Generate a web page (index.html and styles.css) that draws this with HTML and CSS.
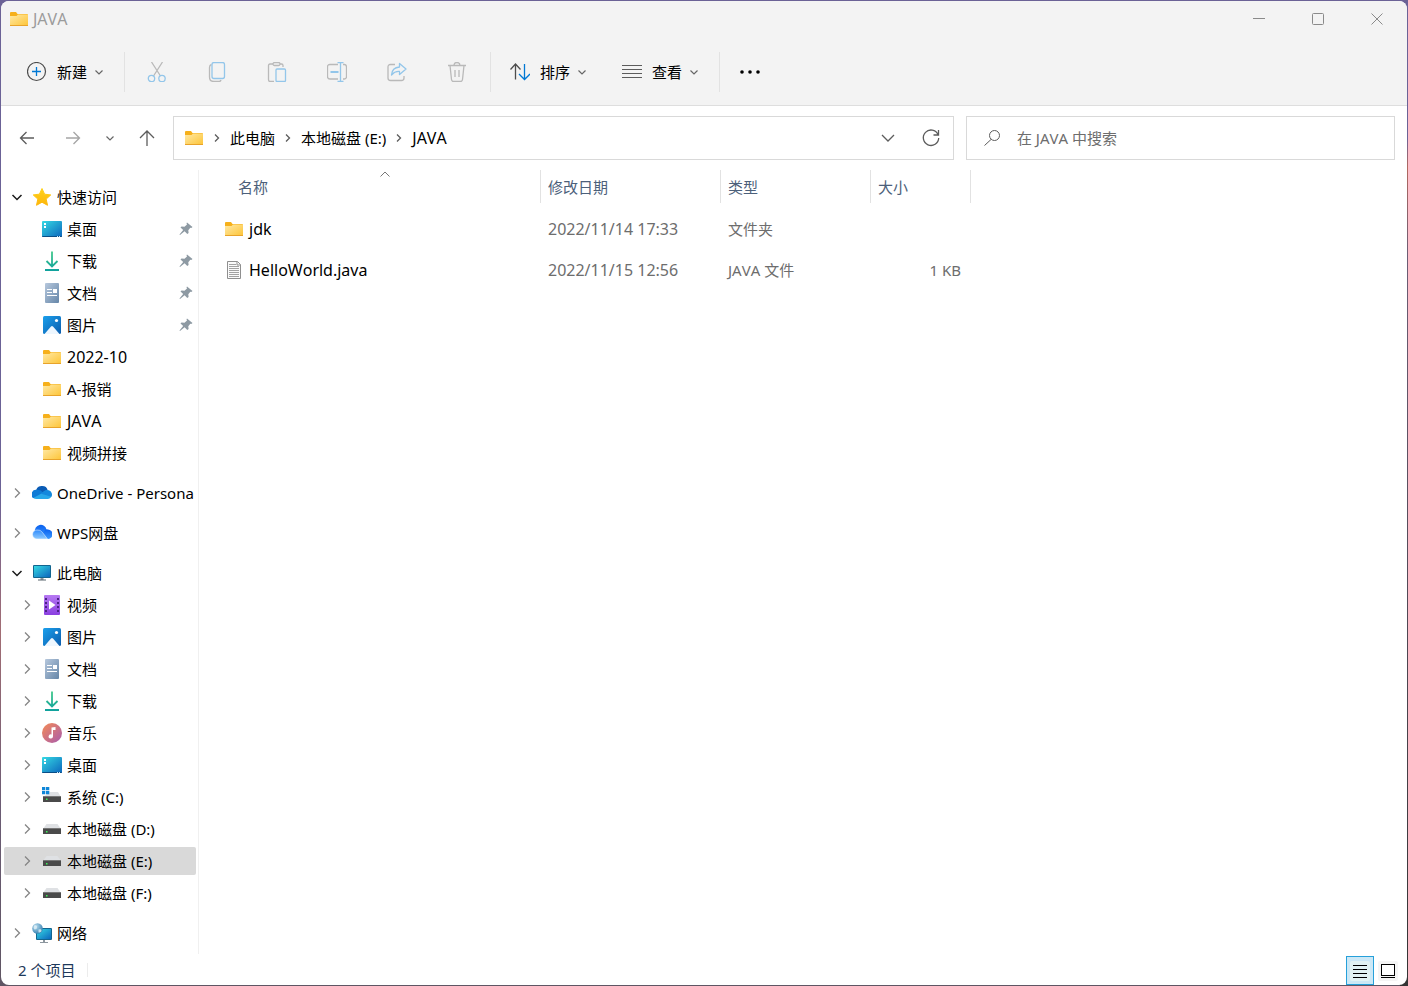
FILE: index.html
```html
<!DOCTYPE html>
<html lang="zh-CN">
<head>
<meta charset="utf-8">
<title>JAVA</title>
<link rel="stylesheet" href="styles.css">
</head>
<body>
<svg class="sprite" aria-hidden="true">
  <defs>
    <linearGradient id="g-folder" x1="0" y1="0" x2="1" y2="1"><stop offset="0" stop-color="#ffe9a6"/><stop offset="1" stop-color="#fdc436"/></linearGradient>
    <linearGradient id="g-screen" x1="0" y1="0" x2="1" y2="1"><stop offset="0" stop-color="#35d9e3"/><stop offset="1" stop-color="#0c66bd"/></linearGradient>
    <linearGradient id="g-down" x1="0" y1="0" x2="0" y2="20" gradientUnits="userSpaceOnUse"><stop offset="0" stop-color="#42c98a"/><stop offset="1" stop-color="#0fa19d"/></linearGradient>
    <linearGradient id="g-doc" x1="0" y1="0" x2="1" y2="1"><stop offset="0" stop-color="#b7c8dd"/><stop offset="1" stop-color="#6586a8"/></linearGradient>
    <linearGradient id="g-pic" x1="0" y1="0" x2="1" y2="1"><stop offset="0" stop-color="#1ba0ec"/><stop offset="1" stop-color="#0b5cad"/></linearGradient>
    <linearGradient id="g-video" x1="0" y1="0" x2="0" y2="1"><stop offset="0" stop-color="#b679f2"/><stop offset="1" stop-color="#8a3fe0"/></linearGradient>
    <linearGradient id="g-music" x1="0" y1="0" x2="1" y2="1"><stop offset="0" stop-color="#f58b55"/><stop offset="1" stop-color="#a85bae"/></linearGradient>
    <linearGradient id="g-star" x1="0" y1="0" x2="0" y2="1"><stop offset="0" stop-color="#ffd21a"/><stop offset="1" stop-color="#fdb60c"/></linearGradient>
    <linearGradient id="g-wps" x1="0" y1="0" x2="0" y2="1"><stop offset="0" stop-color="#0b62f0"/><stop offset="1" stop-color="#3d9bff"/></linearGradient>
    <linearGradient id="g-wps2" x1="0" y1="0" x2="0" y2="1"><stop offset="0" stop-color="#2f8bfb"/><stop offset="1" stop-color="#8fcaff"/></linearGradient>
    <radialGradient id="g-globe" cx="0.35" cy="0.3" r="0.8"><stop offset="0" stop-color="#b8dcee"/><stop offset="1" stop-color="#2a78ab"/></radialGradient>
  </defs>
  <symbol id="i-folder" viewBox="0 0 20 20">
    <path d="M1 4q0-1 1-1h5l1.500 2H18q1 0 1 1v10H1z" fill="#f6b01b"/>
    <path d="M1 7h6.500l1.500-1.500H19V17H1z" fill="url(#g-folder)"/>
    <path d="M1 16h18v.5q0 .5-.5.5h-17q-.5 0-.5-.5z" fill="#e8a32a"/>
  </symbol>
  <symbol id="i-star" viewBox="0 0 20 20"><path d="M10 1.500l2.600 5.700 6.200.7-4.600 4.200 1.300 6.200L10 15.200l-5.500 3.100 1.300-6.200L1.200 7.900l6.200-.7z" fill="url(#g-star)" stroke="url(#g-star)" stroke-linejoin="round"/></symbol>
  <symbol id="i-desktop" viewBox="0 0 20 20">
    <rect y="2" width="20" height="16" rx="1" fill="url(#g-screen)"/><path d="M0 17h20q0 1-1 1H1q-1 0-1-1z" fill="#0a4e86"/>
    <path d="M2 4h2v2H2zM2 7h2v2H2z" fill="#fff"/><path d="M15 17h1v1h-1zM17 17h1v1h-1z" fill="#cfe8f8"/>
  </symbol>
  <symbol id="i-download" viewBox="0 0 20 20"><path d="M10 .5V15M4.500 10l5.500 5.500L15.500 10M3 19h14" fill="none" stroke="url(#g-down)" stroke-width="1.800"/></symbol>
  <symbol id="i-doc" viewBox="0 0 20 20"><rect x="3" width="14" height="20" rx="1" fill="url(#g-doc)"/><path d="M5 6.500h5M5 9.500h5M5 12.500h10" stroke="#fff" fill="none"/><path d="M11 6h4v4h-4z" fill="#fff"/></symbol>
  <symbol id="i-pic" viewBox="0 0 20 20"><rect x="1" y="1" width="18" height="18" rx="1.500" fill="url(#g-pic)"/><path d="M2.500 19L9 11.500q1-1 2 0L17.500 19z" fill="#eef7ff"/><circle cx="14.500" cy="5.500" r="1.600" fill="#fff"/></symbol>
  <symbol id="i-video" viewBox="0 0 20 20"><rect x="2" width="16" height="20" rx="1" fill="url(#g-video)"/><path d="M4 3v15M16 3v15" stroke="#4b2286" stroke-width="2" stroke-dasharray="2 2"/><path d="M7 5.500v9l6.500-4.500z" fill="#fff"/></symbol>
  <symbol id="i-music" viewBox="0 0 20 20"><circle cx="10" cy="10" r="10" fill="url(#g-music)"/><path d="M9.500 4.500l4-.5v3h-2.500v6.500a2.200 2 0 1 1-1.500-2z" fill="#fff"/></symbol>
  <symbol id="i-pc" viewBox="0 0 20 20"><rect x="1" y="2" width="18" height="13" rx="1" fill="#12658f"/><rect x="2" y="3" width="16" height="11" fill="url(#g-screen)"/><path d="M8.500 15h3v2h-3z" fill="#8d979f"/><path d="M6 16.500h8v1H6z" fill="#59646c"/></symbol>
  <symbol id="i-drive" viewBox="0 0 20 20"><path d="M4.500 5h11L19 10H1z" fill="#dfe1e4"/><rect x="1" y="9" width="18" height="6" rx=".5" fill="#4a4a4a"/><path d="M1 9h18v1H1z" fill="#777"/><path d="M4 12h1.500v1.500H4z" fill="#3df25a"/></symbol>
  <symbol id="i-sysdrive" viewBox="0 0 20 20"><path d="M8 5h8l3 5H1z" fill="#dfe1e4"/><rect x="1" y="9" width="18" height="6" rx=".5" fill="#4a4a4a"/><path d="M1 9h18v1H1z" fill="#777"/><path d="M4 11.500h1.500V13H4z" fill="#3df25a"/><path d="M0 0h3.300v3.300H0zM4 0h3.300v3.300H4zM0 4h3.300v3.300H0zM4 4h3.300v3.300H4z" fill="#0f86d8"/></symbol>
  <symbol id="i-network" viewBox="0 0 20 20"><rect x="4" y="5" width="16" height="12" rx="1" fill="#12658f"/><rect x="5" y="6" width="14" height="10" fill="url(#g-screen)"/><path d="M11 17h2v2h3v1H8v-1h3z" fill="#8d979f"/><circle cx="5.500" cy="5.500" r="5.300" fill="url(#g-globe)"/><path d="M2 2.500q3-1 3 1.500t-2.500 2.500Q1 5 2 2.500zM6.500 6.500q3-1 3 1t-3 2z" fill="#e2f1f7" opacity=".8"/></symbol>
  <symbol id="i-onedrive" viewBox="0 0 20 20"><path d="M4 9a6 6 0 0 1 11.800-1.500L11 12z" fill="#0a5bb5"/><path d="M1 15A4.700 4.700 0 0 1 4.700 6.800q3.300-.3 5.800 2.200l4 6z" fill="#0f7bd6"/><path d="M1.200 15l9.300-5q2-3.500 5.300-2.700A4.400 4.400 0 0 1 16 16H4.500q-2 0-3.300-1z" fill="#28a8ea"/><path d="M9 10.800l2-1.700q2-2.400 4.500-1.800 3.500.2 4.400 3.700.2 1.600-.5 2.800z" fill="#1488dd"/></symbol>
  <symbol id="i-wps" viewBox="0 0 20 20"><path d="M3 9a5.800 5.800 0 0 1 11.500-2.500l-2 9H4z" fill="url(#g-wps)"/><path d="M8 15.500L12 8.500q1.500-3 4-2a4.600 4.600 0 0 1-.5 9.500z" fill="url(#g-wps)"/><path d="M5 7q3.500-.5 5.500 2.500L15.500 16H5A4.400 4.400 0 0 1 5 7z" fill="url(#g-wps2)" stroke="#fff" stroke-width=".5"/></symbol>
  <symbol id="i-pin" viewBox="0 0 14 14"><path d="M8 .5L13.500 5l-1.200 1-1-.2-2 2.400.3 2.800L8.300 12 5.600 9.200 1 13l-.5-.5L4.200 8 1.500 5.500l1-1 3 .2L8 2.500 7.500 1.200z" fill="#8e9aa3"/></symbol>
  <symbol id="i-file" viewBox="0 0 20 20"><path d="M3.500 1.500h10l3 3v14h-13z" fill="#fafafa" stroke="#8f8f8f"/><path d="M13 1.500V5h3.500" fill="none" stroke="#8f8f8f"/><path d="M5 4.500h7M5 6.500h10M5 8.500h10M5 10.500h10M5 12.500h10M5 14.500h10M5 16.500h10" stroke="#a2a2a2"/></symbol>
  <symbol id="i-right" viewBox="0 0 10 10"><path d="M3 .5L7.500 5 3 9.500"/></symbol>
  <symbol id="i-crumb" viewBox="0 0 10 10"><path d="M3 1.500L6.500 5 3 8.500"/></symbol>
  <symbol id="i-chev" viewBox="0 0 10 10"><path d="M1.500 3.500L5 7l3.500-3.500"/></symbol>
  <symbol id="i-open" viewBox="0 0 12 12"><path d="M1.500 4L6 8.500 10.500 4"/></symbol>
</svg>

<div class="window">
  <header class="titlebar">
    <svg class="icon"><use href="#i-folder"/></svg>
    <h1 class="title">JAVA</h1>
    <div class="caption-buttons">
      <button class="caption-button" aria-label="最小化"><svg class="caption-icon" viewBox="0 0 12 12"><path d="M0 5.500h12"/></svg></button>
      <button class="caption-button" aria-label="最大化"><svg class="caption-icon" viewBox="0 0 12 12"><rect x=".5" y=".5" width="11" height="11" rx="1"/></svg></button>
      <button class="caption-button" aria-label="关闭"><svg class="caption-icon" viewBox="0 0 12 12"><path d="M.5.5l11 11M11.500.5l-11 11"/></svg></button>
    </div>
  </header>

  <div class="commands" role="toolbar" aria-label="命令栏">
    <button class="command">
      <svg class="icon line" viewBox="0 0 20 20"><circle cx="9.500" cy="9.500" r="9" stroke="#4d4d4d" stroke-width="1.200"/><path d="M9.500 5v9M5 9.500h9" stroke="#0078d4" stroke-width="1.300"/></svg>
      <span>新建</span><svg class="chev"><use href="#i-chev"/></svg>
    </button>
    <span class="divider"></span>
    <div class="icon-group">
      <button class="icon-command" aria-label="剪切" disabled><svg class="icon line" viewBox="0 0 20 20"><path d="M4.500 0l9 14M15.500 0l-9 14" stroke="#b9b9b9"/><circle cx="4.500" cy="16.500" r="3.200" stroke="#93c6ea"/><circle cx="15" cy="16.500" r="3.200" stroke="#93c6ea"/></svg></button>
      <button class="icon-command" aria-label="复制" disabled><svg class="icon line" viewBox="0 0 20 20"><path d="M4.500 2.500q-2 .5-2 3V15q0 4.500 4.500 4.500h5q1.500 0 2-1.500" stroke="#b9b9b9"/><rect x="5" y=".5" width="12.500" height="16" rx="2" stroke="#93c6ea"/></svg></button>
      <button class="icon-command" aria-label="粘贴" disabled><svg class="icon line" viewBox="0 0 20 20"><path d="M6 2H3Q1.500 2 1.500 3.500v14Q1.500 19.500 3 19.500h4M13 2h1.500Q16 2 16 3.500V5" stroke="#b9b9b9"/><rect x="6" y=".5" width="7" height="3" rx="1.500" stroke="#b9b9b9"/><rect x="9" y="7" width="9.500" height="12.500" rx="1" stroke="#93c6ea"/></svg></button>
      <button class="icon-command" aria-label="重命名" disabled><svg class="icon line" viewBox="0 0 20 20"><path d="M11 2.500H3Q.5 2.500.5 5v9.500Q.5 17 3 17h8M16 2.500h1.500q2 0 2 2.500v9.500q0 2.500-2 2.500H16" stroke="#b9b9b9"/><path d="M13.500.5v19M10.500.5h6M10.500 19.500h6" stroke="#93c6ea"/><path d="M3.500 10h8" stroke="#93c6ea" stroke-width="2"/></svg></button>
      <button class="icon-command" aria-label="共享" disabled><svg class="icon line" viewBox="0 0 20 20"><path d="M8 2.500H3.500q-2.500 0-2.500 2.500v11q0 2.500 2.500 2.500h11q2.500 0 2.500-2.500v-2" stroke="#b9b9b9"/><path d="M12.500 1.500L19 7l-6.500 5.500v-3q-4.500-.5-8 3.500.5-7.500 8-8z" stroke="#93c6ea" stroke-linejoin="round"/></svg></button>
      <button class="icon-command" aria-label="删除" disabled><svg class="icon line" viewBox="0 0 20 20"><path d="M1 3.500h18M7 3.500q0-3 3-3t3 3M3 3.500l1.500 14q.2 2 2 2h7q1.800 0 2-2l1.500-14M8 8v7M12 8v7" stroke="#b9b9b9"/></svg></button>
    </div>
    <span class="divider"></span>
    <div class="menu-group">
      <button class="command">
        <svg class="icon line" viewBox="0 0 20 20"><path d="M5.500 17.500V2M.5 7.500l5-5.500 5 5.500" stroke="#4d4d4d" stroke-width="1.300"/><path d="M14.500 2v15.500M9 12l5.500 5.500L20 12" stroke="#0078d4" stroke-width="1.300"/></svg>
        <span>排序</span><svg class="chev"><use href="#i-chev"/></svg>
      </button>
      <button class="command">
        <svg class="icon line" viewBox="0 0 20 20"><path d="M0 3.500h20M0 7.500h20M0 11.500h20M0 15.500h20" stroke="#5c5c5c"/></svg>
        <span>查看</span><svg class="chev"><use href="#i-chev"/></svg>
      </button>
    </div>
    <span class="divider"></span>
    <button class="more" aria-label="查看更多"><svg class="icon" viewBox="0 0 20 20"><circle cx="2" cy="10" r="1.800"/><circle cx="10" cy="10" r="1.800"/><circle cx="18" cy="10" r="1.800"/></svg></button>
  </div>

  <div class="navbar">
    <button class="nav-button" aria-label="后退"><svg class="nav-icon" viewBox="0 0 16 16"><path d="M15 8H1.500M7.500 2L1.500 8l6 6"/></svg></button>
    <button class="nav-button faded" aria-label="前进"><svg class="nav-icon" viewBox="0 0 16 16"><path d="M1 8h13.500M8.500 2l6 6-6 6"/></svg></button>
    <button class="nav-button narrow" aria-label="最近浏览的位置"><svg class="chev"><use href="#i-chev"/></svg></button>
    <button class="nav-button" aria-label="向上"><svg class="nav-icon" viewBox="0 0 16 16"><path d="M8 16V1M1 8l7-7 7 7"/></svg></button>
    <nav class="address" aria-label="地址">
      <svg class="icon"><use href="#i-folder"/></svg>
      <svg class="crumb-sep"><use href="#i-crumb"/></svg><a class="crumb" href="#">此电脑</a>
      <svg class="crumb-sep"><use href="#i-crumb"/></svg><a class="crumb" href="#">本地磁盘 (E:)</a>
      <svg class="crumb-sep"><use href="#i-crumb"/></svg><a class="crumb latin" href="#">JAVA</a>
      <div class="address-actions">
        <button class="address-button" aria-label="以前的位置"><svg class="nav-icon" viewBox="0 0 16 16"><path d="M2 5l6 6 6-6"/></svg></button>
        <button class="address-button" aria-label="刷新"><svg class="icon line" viewBox="0 0 20 20"><path d="M17 6.500A7.700 7.700 0 1 0 17.700 10M17.500 2v5h-5" stroke="#5c5c5c" stroke-width="1.300"/></svg></button>
      </div>
    </nav>
    <label class="search">
      <svg class="nav-icon" viewBox="0 0 16 16"><circle cx="10.500" cy="5.500" r="5"/><path d="M7 9.500L.5 15.500"/></svg>
      <input class="search-input" type="search" placeholder="在 JAVA 中搜索" aria-label="搜索">
    </label>
  </div>

  <main class="content">
    <nav class="sidebar" aria-label="导航窗格">
      <ul class="tree">
        <li class="branch">
          <div class="row"><button class="expander open" aria-label="折叠"><svg><use href="#i-open"/></svg></button><a class="place" href="#"><svg class="icon"><use href="#i-star"/></svg>快速访问</a></div>
          <ul class="leaves">
            <li class="row leaf"><span class="slot"></span><a class="place" href="#"><svg class="icon"><use href="#i-desktop"/></svg>桌面</a><svg class="pin"><use href="#i-pin"/></svg></li>
            <li class="row leaf"><span class="slot"></span><a class="place" href="#"><svg class="icon"><use href="#i-download"/></svg>下载</a><svg class="pin"><use href="#i-pin"/></svg></li>
            <li class="row leaf"><span class="slot"></span><a class="place" href="#"><svg class="icon"><use href="#i-doc"/></svg>文档</a><svg class="pin"><use href="#i-pin"/></svg></li>
            <li class="row leaf"><span class="slot"></span><a class="place" href="#"><svg class="icon"><use href="#i-pic"/></svg>图片</a><svg class="pin"><use href="#i-pin"/></svg></li>
            <li class="row leaf"><span class="slot"></span><a class="place latin" href="#"><svg class="icon"><use href="#i-folder"/></svg>2022-10</a></li>
            <li class="row leaf"><span class="slot"></span><a class="place" href="#"><svg class="icon"><use href="#i-folder"/></svg>A-报销</a></li>
            <li class="row leaf"><span class="slot"></span><a class="place latin" href="#"><svg class="icon"><use href="#i-folder"/></svg>JAVA</a></li>
            <li class="row leaf"><span class="slot"></span><a class="place" href="#"><svg class="icon"><use href="#i-folder"/></svg>视频拼接</a></li>
          </ul>
        </li>
        <li class="branch"><div class="row"><button class="expander" aria-label="展开"><svg><use href="#i-right"/></svg></button><a class="place" href="#"><svg class="icon"><use href="#i-onedrive"/></svg>OneDrive - Persona</a></div></li>
        <li class="branch"><div class="row"><button class="expander" aria-label="展开"><svg><use href="#i-right"/></svg></button><a class="place" href="#"><svg class="icon"><use href="#i-wps"/></svg>WPS网盘</a></div></li>
        <li class="branch">
          <div class="row"><button class="expander open" aria-label="折叠"><svg><use href="#i-open"/></svg></button><a class="place" href="#"><svg class="icon"><use href="#i-pc"/></svg>此电脑</a></div>
          <ul class="leaves">
            <li class="row leaf"><button class="expander" aria-label="展开"><svg><use href="#i-right"/></svg></button><a class="place" href="#"><svg class="icon"><use href="#i-video"/></svg>视频</a></li>
            <li class="row leaf"><button class="expander" aria-label="展开"><svg><use href="#i-right"/></svg></button><a class="place" href="#"><svg class="icon"><use href="#i-pic"/></svg>图片</a></li>
            <li class="row leaf"><button class="expander" aria-label="展开"><svg><use href="#i-right"/></svg></button><a class="place" href="#"><svg class="icon"><use href="#i-doc"/></svg>文档</a></li>
            <li class="row leaf"><button class="expander" aria-label="展开"><svg><use href="#i-right"/></svg></button><a class="place" href="#"><svg class="icon"><use href="#i-download"/></svg>下载</a></li>
            <li class="row leaf"><button class="expander" aria-label="展开"><svg><use href="#i-right"/></svg></button><a class="place" href="#"><svg class="icon"><use href="#i-music"/></svg>音乐</a></li>
            <li class="row leaf"><button class="expander" aria-label="展开"><svg><use href="#i-right"/></svg></button><a class="place" href="#"><svg class="icon"><use href="#i-desktop"/></svg>桌面</a></li>
            <li class="row leaf"><button class="expander" aria-label="展开"><svg><use href="#i-right"/></svg></button><a class="place" href="#"><svg class="icon"><use href="#i-sysdrive"/></svg>系统 (C:)</a></li>
            <li class="row leaf"><button class="expander" aria-label="展开"><svg><use href="#i-right"/></svg></button><a class="place" href="#"><svg class="icon"><use href="#i-drive"/></svg>本地磁盘 (D:)</a></li>
            <li class="row leaf selected"><button class="expander" aria-label="展开"><svg><use href="#i-right"/></svg></button><a class="place" href="#" aria-current="page"><svg class="icon"><use href="#i-drive"/></svg>本地磁盘 (E:)</a></li>
            <li class="row leaf"><button class="expander" aria-label="展开"><svg><use href="#i-right"/></svg></button><a class="place" href="#"><svg class="icon"><use href="#i-drive"/></svg>本地磁盘 (F:)</a></li>
          </ul>
        </li>
        <li class="branch"><div class="row"><button class="expander" aria-label="展开"><svg><use href="#i-right"/></svg></button><a class="place" href="#"><svg class="icon"><use href="#i-network"/></svg>网络</a></div></li>
      </ul>
    </nav>

    <section class="files" aria-label="文件">
      <table class="file-table">
        <colgroup><col class="col-name"><col class="col-date"><col class="col-type"><col class="col-size"></colgroup>
        <thead>
          <tr>
            <th class="name-head" aria-sort="ascending"><button class="sort">名称<svg class="sort-mark" viewBox="0 0 10 6"><path d="M.5 5.500L5 1l4.500 4.500"/></svg></button></th>
            <th><button class="sort">修改日期</button></th>
            <th><button class="sort">类型</button></th>
            <th><button class="sort">大小</button></th>
          </tr>
        </thead>
        <tbody>
          <tr><td class="name-cell"><a class="file latin" href="#"><svg class="icon"><use href="#i-folder"/></svg>jdk</a></td><td class="latin">2022/11/14 17:33</td><td>文件夹</td><td class="size"></td></tr>
          <tr><td class="name-cell"><a class="file latin" href="#"><svg class="icon"><use href="#i-file"/></svg>HelloWorld.java</a></td><td class="latin">2022/11/15 12:56</td><td>JAVA 文件</td><td class="size">1 KB</td></tr>
        </tbody>
      </table>
    </section>
  </main>

  <footer class="status">
    <span class="count">2 个项目</span>
    <div class="view-switch">
      <button class="view-button active" aria-label="详细信息" aria-pressed="true"><svg viewBox="0 0 20 20"><rect width="20" height="20" rx="2" fill="#e3f3f3"/><path d="M3 4.500h14M3 8.500h14M3 12.500h14M3 16.500h14" stroke="#000"/></svg></button>
      <button class="view-button" aria-label="大图标" aria-pressed="false"><svg viewBox="0 0 20 20"><rect width="20" height="20" rx="2" fill="#f5f5f5"/><rect x="3.500" y="3.500" width="13" height="11" fill="#fff" stroke="#000"/><path d="M3 16.500h14" stroke="#000"/></svg></button>
    </div>
  </footer>
</div>
</body>
</html>
```
FILE: styles.css
```css
* { box-sizing: border-box; }

body {
  margin: 0;
  padding: 1px;
  min-height: 100vh;
  display: flex;
  background:
    linear-gradient(#6b6296 0, #6b6296 14%, #b0685f 17%, #6b5c74 26%, #333 100%) right / 8px 100% no-repeat,
    linear-gradient(#6b6296 0, #6b6296 50%, #a26d74 64%, #6b5c74 82%, #5f5563 100%);
  font: 15px/20px "Noto Sans", "Noto Sans CJK SC", sans-serif;
  font-kerning: none;
  color: #000;
}

ul { margin: 0; padding: 0; list-style: none; }
a { color: inherit; text-decoration: none; }
button { padding: 0; border: 0; background: none; font: inherit; color: inherit; }

.sprite { position: absolute; width: 0; height: 0; }
.icon { flex: none; width: 20px; height: 20px; }
.line { fill: none; }
.chev { flex: none; width: 10px; height: 10px; fill: none; stroke: #666; stroke-width: 1.2; }
.latin { font-size: 16px; }

.window {
  flex: 1;
  min-width: 0;
  display: flex;
  flex-direction: column;
  overflow: hidden;
  border-radius: 8px;
  background: #fff;
}

/* Title bar */
.titlebar {
  display: flex;
  align-items: center;
  gap: 4px;
  height: 36px;
  padding: 0 1px 0 8px;
  background: #f3f3f3;
}
.title { margin: 0; font-size: 16px; font-weight: 400; color: #9b9b9b; }
.caption-buttons { display: flex; margin-left: auto; }
.caption-button { display: grid; place-items: center; width: 59px; height: 36px; }
.caption-icon { width: 12px; height: 12px; fill: none; stroke: #8a8a8a; }

/* Command bar */
.commands {
  display: flex;
  align-items: center;
  height: 69px;
  padding: 2px 15px 0;
  border-bottom: 1px solid #dedede;
  background: #f3f3f3;
}
.command { display: flex; align-items: center; height: 40px; padding: 0 11px; }
.command span { margin: 0 7px 0 10px; }
.divider { width: 1px; height: 40px; margin: 0 8px 0 9px; background: #e2e2e2; }
.icon-group { display: flex; gap: 20px; padding: 0 4px; }
.icon-command, .more { display: grid; place-items: center; width: 40px; height: 40px; }
.icon-command .line { stroke-width: 1.3; }
.more { width: 44px; }
.menu-group { display: flex; gap: 13px; }

/* Navigation row */
.navbar { display: flex; align-items: center; gap: 6px; padding: 10px 12px 10px 6px; }
.nav-button { display: grid; place-items: center; width: 40px; height: 40px; }
.nav-button.narrow { width: 22px; }
.nav-button.faded { opacity: .55; }
.nav-icon { flex: none; width: 16px; height: 16px; fill: none; stroke: #5c5c5c; stroke-width: 1.3; }
.address {
  flex: 33 1 0;
  display: flex;
  align-items: center;
  gap: 8px;
  height: 44px;
  padding: 0 6px 0 10px;
  border: 1px solid #d9d9d9;
}
.crumb-sep { flex: none; width: 10px; height: 10px; fill: none; stroke: #5c5c5c; stroke-width: 1.3; }
.address-actions { display: flex; gap: 11px; margin-left: auto; }
.address-button { display: grid; place-items: center; width: 32px; height: 32px; }
.search {
  flex: 17 1 0;
  display: flex;
  align-items: center;
  gap: 17px;
  height: 44px;
  margin-left: 6px;
  padding: 0 17px;
  border: 1px solid #d9d9d9;
}
.search .nav-icon { stroke-width: 1; }
.search-input { flex: 1; min-width: 0; padding: 0; border: 0; outline: 0; background: none; font: inherit; font-kerning: none; color: #000; }
.search-input::placeholder { color: #6d6d6d; opacity: 1; }

/* Body */
.content { flex: 1; display: flex; }
.sidebar { flex: none; width: 198px; padding: 13px 2px 0 3px; border-right: 1px solid #f0f0f0; }
.tree, .leaves { display: flex; flex-direction: column; }
.tree { gap: 12px; }
.leaves { gap: 4px; padding-top: 4px; }
.row { display: flex; align-items: center; gap: 5px; height: 28px; padding-left: 3px; border-radius: 2px; }
.leaf { padding-left: 13px; }
.selected { background: #d9d9d9; }
.place { flex: 1; min-width: 0; display: flex; align-items: center; gap: 5px; overflow: hidden; white-space: nowrap; }
.slot { flex: none; width: 20px; }
.expander { flex: none; display: grid; place-items: center; width: 20px; height: 20px; }
.expander svg { width: 10px; height: 10px; fill: none; stroke: #858585; stroke-width: 1.3; }
.expander.open svg { width: 12px; height: 12px; stroke: #1a1a1a; stroke-width: 1.5; }
.pin { flex: none; width: 14px; height: 14px; margin-right: 3px; }

/* File list */
.files { flex: 1; min-width: 0; }
.file-table { table-layout: fixed; width: 772px; border-collapse: collapse; }
.col-name { width: 342px; }
.col-date { width: 180px; }
.col-type { width: 150px; }
.col-size { width: 100px; }
.file-table th { padding: 0 0 5px; font-weight: 400; text-align: left; }
.sort {
  position: relative;
  display: block;
  width: 100%;
  height: 33px;
  padding-left: 7px;
  border-right: 1px solid #e2e2e2;
  text-align: left;
  color: #4c607a;
}
.name-head .sort { padding-left: 39px; }
.sort-mark { position: absolute; top: 1px; left: 181px; width: 10px; height: 6px; fill: none; stroke: #777; }
.file-table td { height: 41px; padding: 0 10px 0 7px; color: #6d6d6d; }
.file-table .name-cell { padding-left: 25px; }
.file { display: flex; align-items: center; gap: 5px; color: #000; }
.file-table .size { text-align: right; }

/* Status bar */
.status { display: flex; align-items: center; height: 31px; padding: 0 5px 0 17px; }
.count { padding-right: 12px; border-right: 1px solid #ececec; line-height: 14px; color: #1e395b; }
.view-switch { display: flex; align-self: flex-end; margin-left: auto; }
.view-button { display: grid; place-items: center; width: 28px; height: 29px; }
.view-button svg { width: 20px; height: 20px; }
.view-button.active { border: 1px solid #26a0da; background: #cce8f6; }
```
